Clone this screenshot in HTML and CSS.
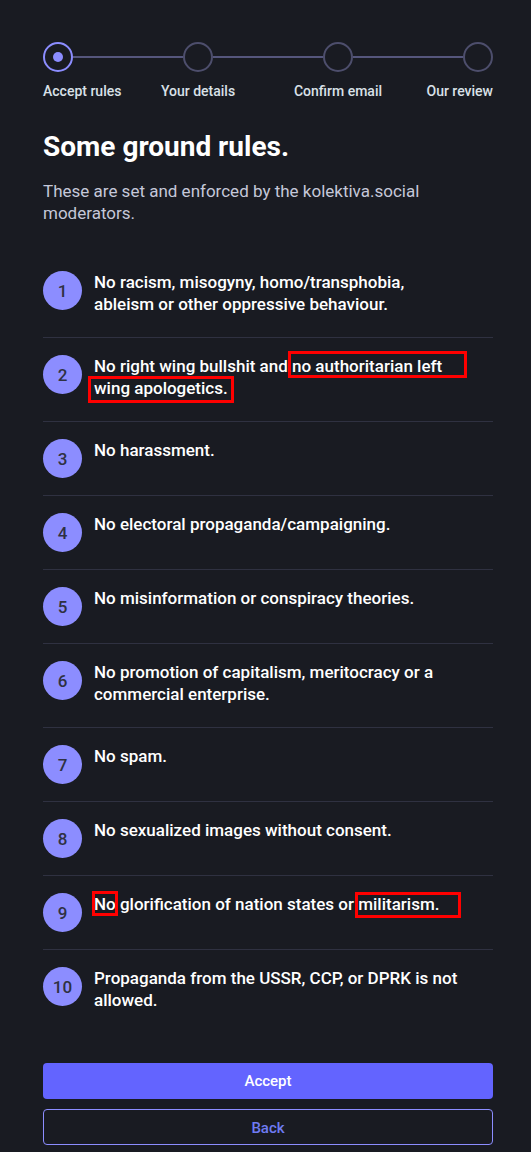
FILE: index.html
```
<!DOCTYPE html>
<html lang="en">
<head>
<meta charset="utf-8">
<title>Some ground rules</title>
<link rel="stylesheet" href="styles.css">
</head>
<body>
<main class="page">
  <div class="stepper">
    <div class="circle active"></div>
    <div class="sep"></div>
    <div class="circle"></div>
    <div class="sep"></div>
    <div class="circle"></div>
    <div class="sep"></div>
    <div class="circle"></div>
    <div class="label label-1">Accept rules</div>
    <div class="label label-2">Your details</div>
    <div class="label label-3">Confirm email</div>
    <div class="label label-4">Our review</div>
  </div>

  <h1 class="title">Some ground rules.</h1>
  <p class="lead">These are set and enforced by the kolektiva.social moderators.</p>

  <ol class="rules">
    <li class="rule"><span class="num">1</span><div class="text">No racism, misogyny, homo/transphobia, ableism or other oppressive behaviour.</div></li>
    <li class="rule"><span class="num">2</span><div class="text">No right wing bullshit and no authoritarian left wing apologetics.</div><span class="mark mark-a"></span><span class="mark mark-b"></span></li>
    <li class="rule"><span class="num">3</span><div class="text">No harassment.</div></li>
    <li class="rule"><span class="num">4</span><div class="text">No electoral propaganda/campaigning.</div></li>
    <li class="rule"><span class="num">5</span><div class="text">No misinformation or conspiracy theories.</div></li>
    <li class="rule"><span class="num">6</span><div class="text">No promotion of capitalism, meritocracy or a commercial enterprise.</div></li>
    <li class="rule"><span class="num">7</span><div class="text">No spam.</div></li>
    <li class="rule"><span class="num">8</span><div class="text">No sexualized images without consent.</div></li>
    <li class="rule"><span class="num">9</span><div class="text">No glorification of nation states or militarism.</div><span class="mark mark-c"></span><span class="mark mark-d"></span></li>
    <li class="rule"><span class="num">10</span><div class="text">Propaganda from the USSR, CCP, or DPRK is not allowed.</div></li>
  </ol>

  <div class="actions">
    <button class="btn btn-primary" type="button">Accept</button>
    <button class="btn btn-secondary" type="button">Back</button>
  </div>
</main>
</body>
</html>
```

FILE: styles.css
```
html, body {
  margin: 0;
  padding: 0;
  background: #191b22;
}

body {
  font-family: Roboto, "Liberation Sans", sans-serif;
  color: #ffffff;
}

.page {
  padding: 42px 38px 0 43px;
}

/* stepper */
.stepper {
  display: grid;
  grid-template-columns: 30px 1fr 30px 1fr 30px 1fr 30px;
  grid-template-rows: 30px 16px;
  row-gap: 11px;
  align-items: center;
}

.circle {
  box-sizing: border-box;
  width: 30px;
  height: 30px;
  border-radius: 50%;
  border: 2px solid #4d4e6c;
  display: flex;
  align-items: center;
  justify-content: center;
  grid-row: 1;
}

.circle.active {
  border-color: #8c8dff;
}

.circle.active::before {
  content: "";
  width: 10px;
  height: 10px;
  border-radius: 50%;
  background: #8c8dff;
}

.sep {
  height: 2px;
  background: #55567c;
  grid-row: 1;
}

.label {
  grid-row: 2;
  font-size: 14px;
  line-height: 16px;
  font-weight: 500;
  color: #d9e1e8;
  white-space: nowrap;
}

.label-1 { grid-column: 1 / 3; text-align: left; }
.label-2 { grid-column: 2 / 5; text-align: center; }
.label-3 { grid-column: 4 / 7; text-align: center; }
.label-4 { grid-column: 6 / 8; text-align: right; }

/* heading */
.title {
  margin: 32px 0 0;
  font-size: 28px;
  line-height: 32px;
  font-weight: 700;
  color: #ffffff;
}

.lead {
  margin: 17px 0 0;
  font-size: 17px;
  line-height: 22px;
  color: #c5c8d9;
}

/* rules */
.rules {
  list-style: none;
  margin: 30px 0 0;
  padding: 0;
}

.rule {
  position: relative;
  display: flex;
  align-items: flex-start;
  padding: 17px 0;
  border-bottom: 1px solid #2f3141;
  font-size: 17px;
  line-height: 22px;
  font-weight: 500;
}

.rule:last-child {
  border-bottom: 0;
}

.num {
  flex: 0 0 39px;
  width: 39px;
  height: 39px;
  border-radius: 50%;
  background: #8c8dff;
  color: #2f3142;
  display: flex;
  align-items: center;
  justify-content: center;
  font-weight: 500;
}

.text {
  padding: 0 30px 5px 12px;
  color: #ffffff;
}

/* red annotation boxes */
.mark {
  position: absolute;
  box-sizing: border-box;
  border: 3px solid #ff0000;
  pointer-events: none;
}

.mark-a { left: 245px; top: 13px; width: 179px; height: 27px; }
.mark-b { left: 45px; top: 38px; width: 146px; height: 27px; }
.mark-c { left: 49px; top: 15px; width: 26px; height: 25px; }
.mark-d { left: 312px; top: 16px; width: 106px; height: 26px; }

/* buttons */
.actions {
  margin-top: 30px;
  display: flex;
  flex-direction: column;
  gap: 10px;
}

.btn {
  box-sizing: border-box;
  width: 100%;
  height: 36px;
  padding: 7px 18px;
  border-radius: 4px;
  font-family: Roboto, "Liberation Sans", sans-serif;
  font-size: 15px;
  line-height: 22px;
  font-weight: 500;
  cursor: pointer;
}

.btn-primary {
  background: #6364ff;
  border: 0;
  color: #ffffff;
}

.btn-secondary {
  background: transparent;
  border: 1px solid #8c8dff;
  color: #6f7bf2;
}
```
